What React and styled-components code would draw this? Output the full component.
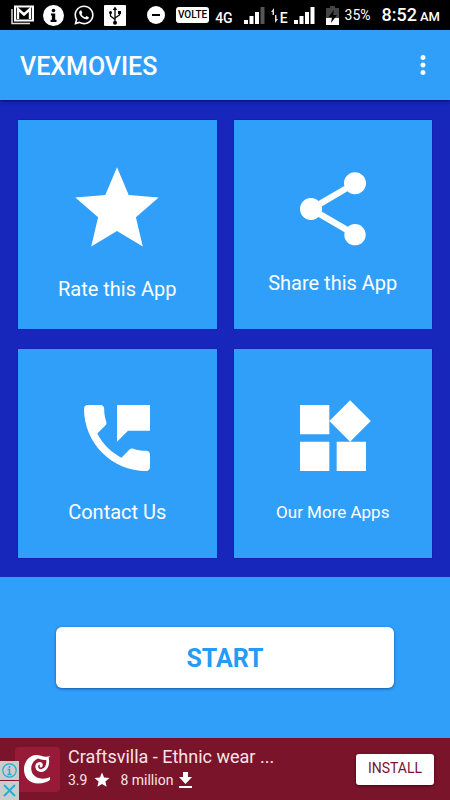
import React from 'react';
import styled, { createGlobalStyle } from 'styled-components';
import { MdMoreVert, MdShare, MdStar, MdWidgets } from 'react-icons/md';
import { FaWhatsapp } from 'react-icons/fa';

const blue = '#309ffa';
const navy = '#1726bb';
const maroon = '#79142b';

const GlobalStyle = createGlobalStyle`
  * {
    box-sizing: border-box;
  }

  body {
    margin: 0;
    background: ${blue};
    color: #fff;
    font-family: Roboto, 'Liberation Sans', sans-serif;
  }

  button {
    font-family: inherit;
    border: 0;
    padding: 0;
    cursor: pointer;
  }

  svg {
    display: block;
    flex: none;
  }
`;

const Screen = styled.div`
  min-height: 100vh;
  display: flex;
  flex-direction: column;
`;

const StatusBar = styled.div`
  height: 30px;
  padding: 0 10px 0 11px;
  display: flex;
  align-items: center;
  justify-content: space-between;
  background: #000;
`;

const StatusGroup = styled.div`
  display: flex;
  align-items: center;
  gap: ${props => props.$gap}px;
`;

const Volte = styled.span`
  padding: 0 2px;
  border-radius: 3px;
  background: #fff;
  color: #000;
  font-size: 10px;
  line-height: 16px;
  font-weight: 500;
`;

const Network = styled.span`
  padding-top: 5px;
  font-size: 14px;
  line-height: 16px;
  font-weight: 500;
`;

const Percent = styled.span`
  font-size: 14px;
  line-height: 20px;
`;

const Clock = styled.span`
  padding-top: 2px;
  font-size: 18px;
  line-height: 24px;
  font-weight: 500;
`;

const Meridiem = styled.small`
  margin-left: 3px;
  font-size: 13px;
`;

const Header = styled.header`
  position: relative;
  height: 70px;
  padding: 0 12px 0 20px;
  display: flex;
  align-items: center;
  justify-content: space-between;
  background: ${blue};
  box-shadow: 0 1px 3px rgba(0, 0, 60, 0.7);
`;

const Title = styled.h1`
  margin: 0;
  padding-top: 4px;
  font-size: 25px;
  line-height: 32px;
  font-weight: 500;
`;

const MenuButton = styled.button`
  background: none;
  color: #fff;
`;

const Grid = styled.main`
  padding: 20px 18px 19px;
  display: grid;
  grid-template-columns: 1fr 1fr;
  grid-auto-rows: 209px;
  gap: 20px 17px;
  background: ${navy};
`;

const TileButton = styled.button`
  padding-top: 10px;
  display: flex;
  flex-direction: column;
  align-items: center;
  justify-content: center;
  gap: 18px;
  background: ${blue};
  color: #fff;
  box-shadow: 0 0 1px #0000a0;
`;

const TileLabel = styled.span`
  font-size: ${props => (props.$small ? 17 : 20)}px;
  line-height: 24px;
`;

const StartArea = styled.section`
  flex: 1;
  padding: 50px 56px;
`;

const StartButton = styled.button`
  width: 100%;
  height: 61px;
  padding-top: 3px;
  border-radius: 6px;
  background: #fff;
  color: #259bf8;
  font-size: 25px;
  line-height: 32px;
  font-weight: 700;
  box-shadow: 0 1px 3px rgba(0, 40, 100, 0.6);
`;

const Ad = styled.aside`
  position: relative;
  height: 62px;
  padding: 0 16px 0 15px;
  display: flex;
  align-items: center;
  background: ${maroon};
`;

const AdLogo = styled.div`
  width: 45px;
  height: 45px;
  margin-right: 8px;
  display: flex;
  align-items: center;
  justify-content: center;
  border-radius: 4px;
  background: #981a39;
`;

const AdText = styled.div`
  flex: 1;
  min-width: 0;
  padding-bottom: 2px;
`;

const AdTitle = styled.div`
  font-size: 18px;
  line-height: 24px;
  color: #f6e4e8;
`;

const AdMeta = styled.div`
  display: flex;
  align-items: center;
  font-size: 14px;
  line-height: 22px;
  color: #f6e4e8;

  svg {
    margin: 0 9px 0 6px;
  }
`;

const InstallButton = styled.button`
  width: 78px;
  height: 31px;
  padding-bottom: 2px;
  border-radius: 3px;
  background: #fff;
  color: ${maroon};
  font-size: 14px;
  line-height: 20px;
  box-shadow: 0 1px 3px rgba(0, 0, 0, 0.5);
`;

const AdChoices = styled.div`
  position: absolute;
  left: 0;
  bottom: 0;
  display: grid;
  gap: 1px;
`;

const AdChoice = styled.button`
  width: 19px;
  height: 19px;
  display: flex;
  align-items: center;
  justify-content: center;
  background: #ccc;
  color: #20add0;
`;

const GmailIcon = () => (
  <svg width="23" height="20" viewBox="0 0 23 20" fill="none">
    <path d="M1 4v14.5h18" stroke="#ddd" strokeWidth="1.5" />
    <path d="M4 1.5h18v14H4z" stroke="#fff" strokeWidth="2" />
    <path d="M7 14V4l6 5.500 6-5.500v10" stroke="#fff" strokeWidth="2.4" />
  </svg>
);

const InfoIcon = () => (
  <svg width="21" height="21" viewBox="0 0 21 21">
    <circle cx="10.5" cy="10.5" r="10.5" fill="#fff" />
    <circle cx="10.5" cy="5.5" r="1.8" fill="#000" />
    <path d="M8 8.5h4.2v6.3h1.3V17H7.6v-2.2h1.3v-4.2H8z" fill="#000" />
  </svg>
);

const UsbIcon = () => (
  <svg width="22" height="21" viewBox="0 0 22 21">
    <rect width="22" height="21" rx="1" fill="#fff" />
    <path
      d="M11 4v13M11 14.5L6.5 11V7.5M11 13l4.5-3V7.5"
      fill="none"
      stroke="#000"
      strokeWidth="1.3"
    />
    <path d="M11 1.5L13.2 5H8.8z" />
    <circle cx="11" cy="17.8" r="2" />
    <circle cx="6.5" cy="7.5" r="1.5" />
    <path d="M14 6h3v3h-3z" />
  </svg>
);

const MinusIcon = () => (
  <svg width="18" height="18" viewBox="0 0 18 18">
    <circle cx="9" cy="9" r="9" fill="#fff" />
    <path d="M5 8h8v2H5z" fill="#000" />
  </svg>
);

const SignalIcon = ({ full }) => (
  <svg width="21" height="17" viewBox="0 0 21 17" fill="#fff">
    <path d="M0 13h4v4H0zM5.5 9h4v8h-4zM11 5h4v12h-4z" />
    <path d="M16.5 0h4v17h-4z" fill={full ? '#fff' : '#555'} />
  </svg>
);

const ArrowsIcon = () => (
  <svg width="7" height="15" viewBox="0 0 7 15" fill="#ddd">
    <path d="M0 4l3-4v7H1.5V4zM7 11l-3 4V7h1.500v4z" />
  </svg>
);

const BatteryIcon = () => (
  <svg width="13" height="19" viewBox="0 0 13 19">
    <path d="M4 0h5v2h4v17H0V2h4z" fill="#444" />
    <path d="M0 12h13v7H0z" fill="#fff" />
    <path d="M8 4l-5.5 7H6l-1 6 6-8H7.2z" fill="#000" />
  </svg>
);

const PhoneMessageIcon = ({ size }) => (
  <svg width={size} height={size} viewBox="0 0 24 24" fill="currentColor">
    <path d="M20 15.5c-1.25 0-2.45-.2-3.57-.57-.35-.11-.74-.03-1.02.24l-2.2 2.2c-2.83-1.44-5.15-3.75-6.59-6.58l2.2-2.21c.28-.27.36-.66.25-1.01C8.7 6.45 8.5 5.25 8.5 4c0-.55-.45-1-1-1H4c-.55 0-1 .45-1 1 0 9.39 7.61 17 17 17 .55 0 1-.45 1-1v-3.5c0-.55-.45-1-1-1zM12 3v10l3-3h6V3h-9z" />
  </svg>
);

const CraftsvillaIcon = () => (
  <svg width="27" height="29" viewBox="0 0 27 29">
    <path
      d="M26 22C20 25 12 24 8.500 18.500 5.500 13 8 6 14 3.500c3 1.500 6 1.500 8 1.500l4.500-4C20 3 17 0 12 0 5 .5 0 7 0 14.500 0 23 6 28.500 14 28.500c5 0 9-1.500 12-3.500z"
      fill="#fff"
    />
    <path
      d="M23.500 4c1 6-1.500 11-6 11.500-5.500.5-6-6-2.500-7 2-.5 3 1 2 2.500"
      fill="none"
      stroke="#fff"
      strokeWidth="2.800"
      strokeLinecap="round"
    />
  </svg>
);

const DownloadIcon = () => (
  <svg width="13" height="16" viewBox="0 0 13 16" fill="#fff">
    <path d="M4 0h5v5h4l-6.5 7L0 5h4zM0 14h13v2H0z" />
  </svg>
);

const AdInfoIcon = () => (
  <svg width="15" height="15" viewBox="0 0 15 15" fill="none" stroke="currentColor">
    <circle cx="7.5" cy="7.5" r="6.7" strokeWidth="1.2" />
    <path d="M7.5 3v2M5.5 6.5h2V11M5.5 11.5h4" strokeWidth="1.5" />
  </svg>
);

const CloseIcon = () => (
  <svg width="13" height="13" viewBox="0 0 13 13" stroke="currentColor" strokeWidth="1.8">
    <path d="M1 1l11 11M12 1L1 12" />
  </svg>
);

const tiles = [
  { label: 'Rate this App', Icon: MdStar, size: 100 },
  { label: 'Share this App', Icon: MdShare, size: 88 },
  { label: 'Contact Us', Icon: PhoneMessageIcon, size: 88 },
  { label: 'Our More Apps', Icon: MdWidgets, size: 88, small: true },
];

const Tile = ({ label, Icon, size, small }) => (
  <TileButton type="button">
    <Icon size={size} />
    <TileLabel $small={small}>{label}</TileLabel>
  </TileButton>
);

export default function App() {
  return (
    <Screen>
      <GlobalStyle />
      <StatusBar>
        <StatusGroup $gap={9}>
          <GmailIcon />
          <InfoIcon />
          <FaWhatsapp size={22} />
          <UsbIcon />
        </StatusGroup>
        <StatusGroup $gap={11}>
          <MinusIcon />
          <StatusGroup $gap={6}>
            <Volte>VOLTE</Volte>
            <Network>4G</Network>
          </StatusGroup>
          <StatusGroup $gap={6}>
            <SignalIcon />
            <StatusGroup $gap={2}>
              <ArrowsIcon />
              <Network>E</Network>
            </StatusGroup>
            <SignalIcon full />
          </StatusGroup>
          <StatusGroup $gap={6}>
            <BatteryIcon />
            <Percent>35%</Percent>
          </StatusGroup>
          <Clock>
            8:52
            <Meridiem>AM</Meridiem>
          </Clock>
        </StatusGroup>
      </StatusBar>
      <Header>
        <Title>VEXMOVIES</Title>
        <MenuButton type="button" aria-label="More options">
          <MdMoreVert size={30} />
        </MenuButton>
      </Header>
      <Grid>
        {tiles.map(tile => (
          <Tile key={tile.label} {...tile} />
        ))}
      </Grid>
      <StartArea>
        <StartButton type="button">START</StartButton>
      </StartArea>
      <Ad>
        <AdLogo>
          <CraftsvillaIcon />
        </AdLogo>
        <AdText>
          <AdTitle>Craftsvilla - Ethnic wear ...</AdTitle>
          <AdMeta>
            3.9
            <MdStar size={18} color="#fff" />
            8 million
            <DownloadIcon />
          </AdMeta>
        </AdText>
        <InstallButton type="button">INSTALL</InstallButton>
        <AdChoices>
          <AdChoice type="button" aria-label="About this ad">
            <AdInfoIcon />
          </AdChoice>
          <AdChoice type="button" aria-label="Close ad">
            <CloseIcon />
          </AdChoice>
        </AdChoices>
      </Ad>
    </Screen>
  );
}
